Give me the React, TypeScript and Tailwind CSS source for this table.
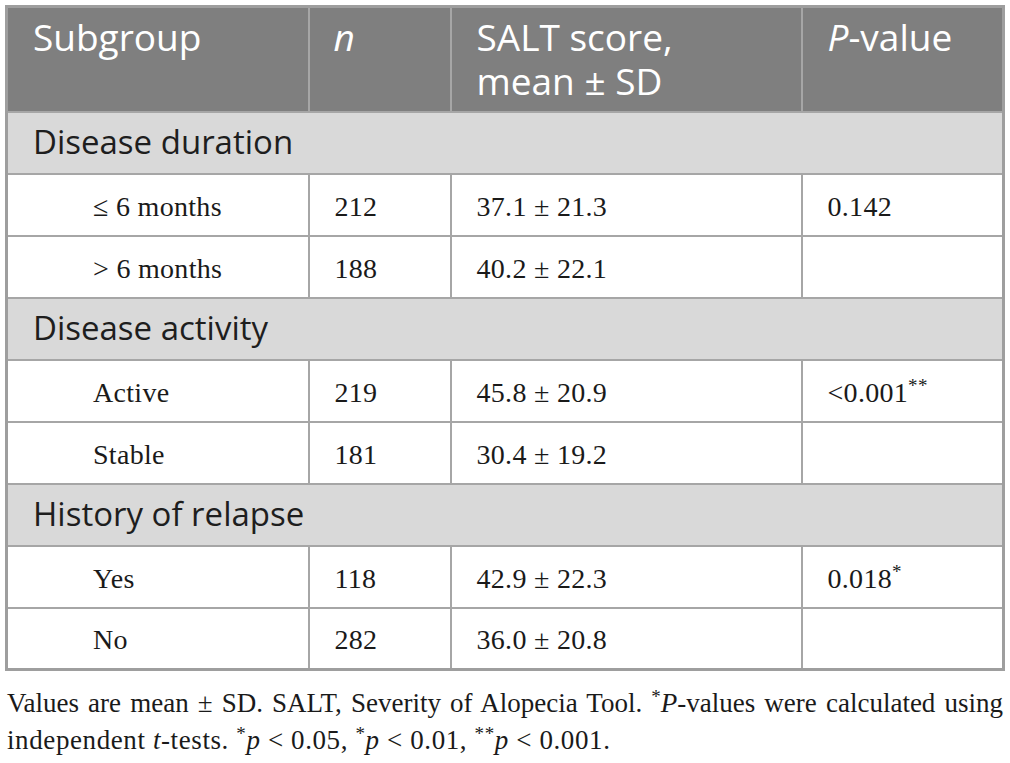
import React from "react";

type Row =
    | { kind: "group"; label: string }
    | { kind: "data"; label: string; n: string; score: string; p?: React.ReactNode };

const star = "text-[19px] top-[-0.5em]";

const rows: Row[] = [
    { kind: "group", label: "Disease duration" },
    { kind: "data", label: "≤ 6 months", n: "212", score: "37.1 ± 21.3", p: "0.142" },
    { kind: "data", label: "> 6 months", n: "188", score: "40.2 ± 22.1" },
    { kind: "group", label: "Disease activity" },
    {
        kind: "data",
        label: "Active",
        n: "219",
        score: "45.8 ± 20.9",
        p: (
            <>
                &lt;0.001<sup className={star}>**</sup>
            </>
        ),
    },
    { kind: "data", label: "Stable", n: "181", score: "30.4 ± 19.2" },
    { kind: "group", label: "History of relapse" },
    {
        kind: "data",
        label: "Yes",
        n: "118",
        score: "42.9 ± 22.3",
        p: (
            <>
                0.018<sup className={star}>*</sup>
            </>
        ),
    },
    { kind: "data", label: "No", n: "282", score: "36.0 ± 20.8" },
];

const sans = "font-['Open_Sans',sans-serif]";
const serif = "font-['Liberation_Serif','Times_New_Roman',serif]";

export default function App() {
    return (
        <div className="bg-white w-[1010px] h-[763px] overflow-hidden pt-[5px] pl-[5px]">
            <table className="border-collapse table-fixed w-[997px] border-[3px] border-[#9e9e9e]">
                <colgroup>
                    <col className="w-[302px]" />
                    <col className="w-[142px]" />
                    <col className="w-[351px]" />
                    <col className="w-[202px]" />
                </colgroup>
                <thead>
                    <tr className={`h-[105px] bg-[#7f7f7f] text-white text-[37px] leading-[44px] ${sans}`}>
                        <th className="border-2 border-[#a6a6a6] align-top text-left font-normal pl-[25px] pt-[7px]">Subgroup</th>
                        <th className="border-2 border-[#a6a6a6] align-top text-left font-normal pl-[24px] pt-[7px] italic">n</th>
                        <th className="border-2 border-[#a6a6a6] align-top text-left font-normal pl-[25px] pt-[7px]">
                            SALT score,
                            <br />
                            mean ± SD
                        </th>
                        <th className="border-2 border-[#a6a6a6] align-top text-left font-normal pl-[25px] pt-[7px]">
                            <span className="italic">P</span>-value
                        </th>
                    </tr>
                </thead>
                <tbody>
                    {rows.map((row, i) =>
                        row.kind === "group" ? (
                            <tr key={i} className={`h-[62px] bg-[#d9d9d9] text-[#1e1e1e] text-[33px] ${sans}`}>
                                <td colSpan={4} className="border-2 border-[#a6a6a6] pl-[25px] pb-[2px]">
                                    {row.label}
                                </td>
                            </tr>
                        ) : (
                            <tr key={i} className={`h-[62px] bg-white text-[#1a1a1a] text-[28px] tracking-[0.3px] ${serif}`}>
                                <td className="border-2 border-[#a6a6a6] pl-[85px] pt-[4px]">{row.label}</td>
                                <td className="border-2 border-[#a6a6a6] pl-[25px] pt-[4px]">{row.n}</td>
                                <td className="border-2 border-[#a6a6a6] pl-[25px] pt-[4px]">{row.score}</td>
                                <td className="border-2 border-[#a6a6a6] pl-[25px] pt-[4px]">{row.p}</td>
                            </tr>
                        )
                    )}
                </tbody>
            </table>

            <div className={`w-[996px] ml-[2px] mt-[14px] text-[27px] leading-[37px] text-[#1a1a1a] ${serif}`}>
                <p className="text-justify [text-align-last:justify]">
                    Values are mean ± SD. SALT, Severity of Alopecia Tool.{" "}
                    <sup className={star}>*</sup>
                    <span className="italic">P</span>-values were calculated using
                </p>
                <p className="tracking-[0.6px]">
                    independent <span className="italic">t</span>-tests.{" "}
                    <sup className={star}>*</sup>
                    <span className="italic">p</span> &lt; 0.05,{" "}
                    <sup className={star}>*</sup>
                    <span className="italic">p</span> &lt; 0.01,{" "}
                    <sup className={star}>**</sup>
                    <span className="italic">p</span> &lt; 0.001.
                </p>
            </div>
        </div>
    );
}
